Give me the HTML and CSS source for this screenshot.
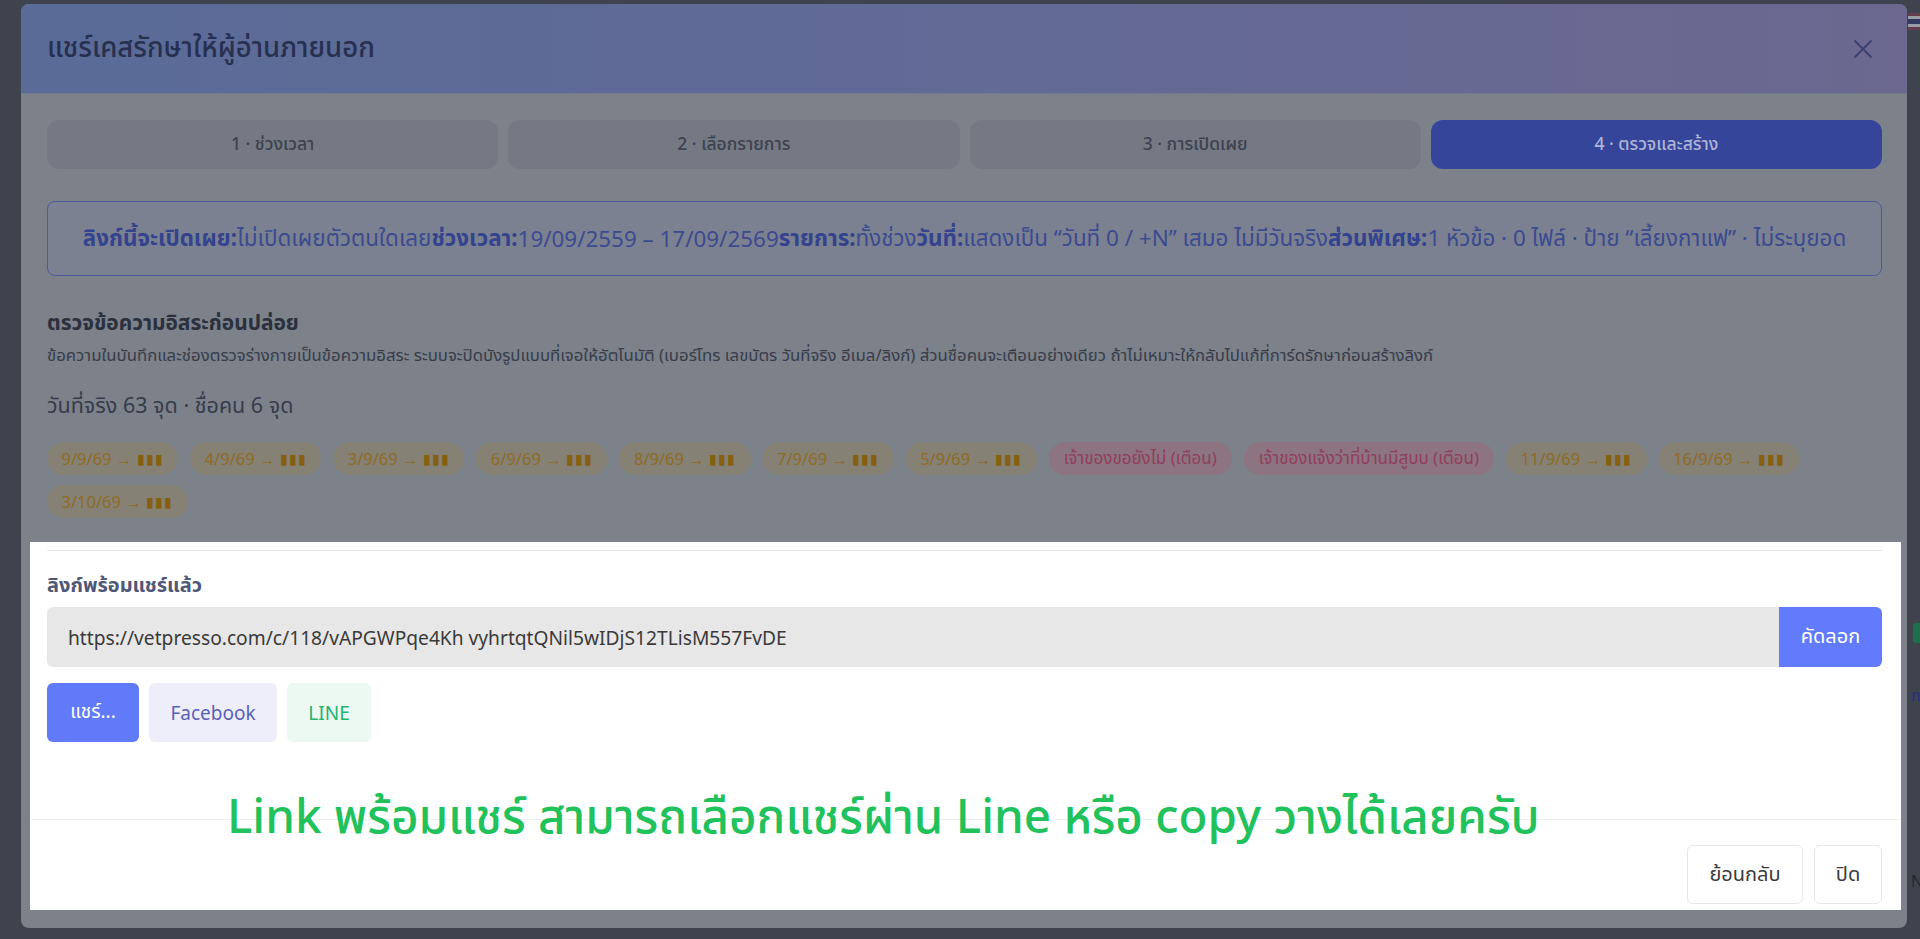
FILE: index.html
```html
<!DOCTYPE html>
<html lang="th">
<head>
<meta charset="utf-8">
<title>แชร์เคสรักษาให้ผู้อ่านภายนอก</title>
<link rel="stylesheet" href="styles.css">
</head>
<body>
<div class="page">
  <div class="behind">
    <span class="flag"></span>
    <span class="badge"></span>
    <span class="peek peek-blue">ภา</span>
    <span class="peek peek-n">N</span>
  </div>
  <div class="modal">
    <div class="modal-header">
      <h1 class="modal-title">แชร์เคสรักษาให้ผู้อ่านภายนอก</h1>
      <svg class="close" viewBox="0 0 20 20" width="20" height="20"><path d="M2 2 L18 18 M18 2 L2 18" stroke="#39416d" stroke-width="1.8" fill="none" stroke-linecap="round"/></svg>
    </div>
    <div class="modal-body">
      <div class="steps">
        <div class="step">1 · ช่วงเวลา</div>
        <div class="step">2 · เลือกรายการ</div>
        <div class="step">3 · การเปิดเผย</div>
        <div class="step step-active">4 · ตรวจและสร้าง</div>
      </div>
      <div class="summary">
        <b>ลิงก์นี้จะเปิดเผย:</b>ไม่เปิดเผยตัวตนใดเลย<b>ช่วงเวลา:</b>19/09/2559 – 17/09/2569<b>รายการ:</b>ทั้งช่วง<b>วันที่:</b>แสดงเป็น “วันที่ 0 / +N” เสมอ ไม่มีวันจริง<b>ส่วนพิเศษ:</b>1 หัวข้อ · 0 ไฟล์ · ป้าย “เลี้ยงกาแฟ” · ไม่ระบุยอด
      </div>
      <h2 class="check-title">ตรวจข้อความอิสระก่อนปล่อย</h2>
      <p class="check-desc">ข้อความในบันทึกและช่องตรวจร่างกายเป็นข้อความอิสระ ระบบจะปิดบังรูปแบบที่เจอให้อัตโนมัติ (เบอร์โทร เลขบัตร วันที่จริง อีเมล/ลิงก์) ส่วนชื่อคนจะเตือนอย่างเดียว ถ้าไม่เหมาะให้กลับไปแก้ที่การ์ดรักษาก่อนสร้างลิงก์</p>
      <div class="count">วันที่จริง 63 จุด · ชื่อคน 6 จุด</div>
      <div class="chips">
        <span class="chip">9/9/69 → <i>▮▮▮</i></span>
        <span class="chip">4/9/69 → <i>▮▮▮</i></span>
        <span class="chip">3/9/69 → <i>▮▮▮</i></span>
        <span class="chip">6/9/69 → <i>▮▮▮</i></span>
        <span class="chip">8/9/69 → <i>▮▮▮</i></span>
        <span class="chip">7/9/69 → <i>▮▮▮</i></span>
        <span class="chip">5/9/69 → <i>▮▮▮</i></span>
        <span class="chip chip-red">เจ้าของขอยังไม่ (เตือน)</span>
        <span class="chip chip-red">เจ้าของแจ้งว่าที่บ้านมีสูบบ (เตือน)</span>
        <span class="chip">11/9/69 → <i>▮▮▮</i></span>
        <span class="chip">16/9/69 → <i>▮▮▮</i></span>
        <span class="chip">3/10/69 → <i>▮▮▮</i></span>
      </div>
    </div>
    <div class="spotlight">
      <div class="link-section">
        <div class="link-inner">
          <div class="link-label">ลิงก์พร้อมแชร์แล้ว</div>
          <div class="link-field">
            <div class="link-input">https://vetpresso.com/c/118/vAPGWPqe4Kh vyhrtqtQNil5wIDjS12TLisM557FvDE</div>
            <button class="btn-copy">คัดลอก</button>
          </div>
          <div class="share-row">
            <button class="btn btn-share">แชร์...</button>
            <button class="btn btn-fb">Facebook</button>
            <button class="btn btn-line">LINE</button>
          </div>
        </div>
      </div>
      <div class="modal-footer">
        <button class="btn btn-ghost btn-back">ย้อนกลับ</button>
        <button class="btn btn-ghost btn-close">ปิด</button>
      </div>
    </div>
  </div>
  <div class="annotation">Link พร้อมแชร์ สามารถเลือกแชร์ผ่าน Line หรือ copy วางได้เลยครับ</div>
</div>
</body>
</html>
```
FILE: styles.css
```css
* { box-sizing: border-box; }
html, body { margin: 0; padding: 0; }
body {
  width: 1920px;
  height: 939px;
  overflow: hidden;
  background: #3f434e;
  font-family: "Noto Sans", "Noto Sans Thai", "Noto Sans Thai UI", sans-serif;
  color: #333;
}
.page {
  position: relative;
  width: 1920px;
  height: 939px;
  padding: 4px 0 0 21px;
}
.behind { position: absolute; inset: 0; }
.flag {
  position: absolute; left: 1908px; top: 13px; width: 12px; height: 17px;
  background: linear-gradient(#7a3a4a 0 20%, #d8d8e0 20% 35%, #2b3470 35% 65%, #d8d8e0 65% 80%, #7a3a4a 80%);
  opacity: .6;
}
.badge {
  position: absolute; left: 1913px; top: 623px; width: 10px; height: 20px;
  background: #1f6f4c; border-radius: 3px;
}
.peek { position: absolute; font-size: 16px; }
.peek-blue { left: 1911px; top: 684px; color: #2a2f7a; }
.peek-n { left: 1911px; top: 870px; color: #23262e; }

.modal {
  position: relative;
  width: 1886px;
  height: 924px;
  background: #7c818a;
  border-radius: 8px;
  overflow: hidden;
  display: flex;
  flex-direction: column;
}
.modal-header {
  height: 90px;
  flex: none;
  display: flex;
  align-items: center;
  justify-content: space-between;
  padding: 0 34px 0 26px;
  background: linear-gradient(90deg, #5a6b97 0%, #626a96 50%, #6c6890 100%);
  border-bottom: 1px solid #737a8c;
}
.modal-title {
  margin: 0;
  font-size: 27.5px;
  font-weight: 500;
  color: #283050;
}
.close { display: block; }

.modal-body {
  padding: 26px 25px 0 26px;
  flex: none;
}
.steps {
  display: grid;
  grid-template-columns: repeat(4, 1fr);
  gap: 10px;
}
.step {
  height: 49px;
  border-radius: 12px;
  background: #747983;
  color: #3d424f;
  font-size: 17.5px;
  font-weight: 500;
  display: flex;
  align-items: center;
  justify-content: center;
}
.step-active {
  background: #35459a;
  color: #aeb4d4;
}
.summary {
  margin-top: 32px;
  height: 75px;
  border: 1px solid #4b5a9c;
  border-radius: 8px;
  background: #7b8190;
  color: #3c4b8f;
  font-size: 22.4px;
  display: flex;
  align-items: center;
  justify-content: center;
  white-space: nowrap;
}
.summary b { font-weight: 700; color: #33438e; }
.check-title {
  margin: 32px 0 0;
  font-size: 20.9px;
  font-weight: 700;
  line-height: 28px;
  color: #2b303d;
}
.check-desc {
  margin: 7px 0 0;
  font-size: 16.8px;
  line-height: 24px;
  color: #383d4a;
}
.count {
  margin-top: 23px;
  font-size: 21.5px;
  line-height: 30px;
  color: #373c4b;
}
.chips {
  margin-top: 22px;
  max-width: 1800px;
  display: flex;
  flex-wrap: wrap;
  gap: 10px 12px;
}
.chip {
  height: 33px;
  padding: 0 14.5px;
  border-radius: 17px;
  background: #858175;
  color: #8f6b24;
  font-size: 16.5px;
  display: inline-flex;
  align-items: center;
  white-space: pre;
}
.chip i {
  font-style: normal;
  color: #86600f;
  font-size: 14px;
  letter-spacing: 1px;
}
.chip-red {
  background: #8c7480;
  color: #913e5c;
  font-size: 17px;
  padding: 0 15px;
}

.spotlight {
  margin: 24px 6px 0 9px;
  background: #fff;
  flex: none;
}
.link-section {
  padding: 8px 19px 0 17px;
}
.link-inner {
  border-top: 1px solid #e5e7eb;
  padding-top: 20px;
  height: 269px;
}
.link-label {
  font-size: 20px;
  font-weight: 700;
  line-height: 28px;
  color: #4f5877;
}
.link-field {
  margin-top: 8px;
  display: flex;
  height: 60px;
}
.link-input {
  flex: 1;
  background: #e7e7e7;
  border-radius: 6px 0 0 6px;
  display: flex;
  align-items: center;
  padding: 0 21px;
  font-size: 19.2px;
  color: #3a3a3a;
}
.btn-copy {
  width: 103px;
  border: none;
  border-radius: 0 6px 6px 0;
  background: #617bfc;
  color: #fff;
  font-family: inherit;
  font-size: 20px;
}
.share-row {
  margin-top: 16px;
  display: flex;
  gap: 10px;
}
.btn {
  height: 59px;
  border: none;
  border-radius: 6px;
  font-family: inherit;
  font-size: 19px;
  padding: 0;
}
.btn-share { background: #617af9; color: #fff; width: 92px; }
.btn-fb { background: #eeeefb; color: #5863b4; width: 128px; }
.btn-line { background: #ebf9f2; color: #22b46d; width: 84px; }
.modal-footer {
  border-top: 1px solid #eeeff2;
  display: flex;
  justify-content: flex-end;
  gap: 11px;
  padding: 25px 19px 6px 0;
}
.btn-ghost {
  background: #fff;
  border: 1px solid #e5e7eb;
  color: #3a3a3a;
  font-size: 20px;
}
.btn-back { width: 116px; }
.btn-close { width: 68px; }

.annotation {
  position: absolute;
  left: 227px;
  top: 780px;
  font-size: 47.5px;
  font-weight: 500;
  line-height: 70px;
  color: #21c15b;
  white-space: nowrap;
}
```
